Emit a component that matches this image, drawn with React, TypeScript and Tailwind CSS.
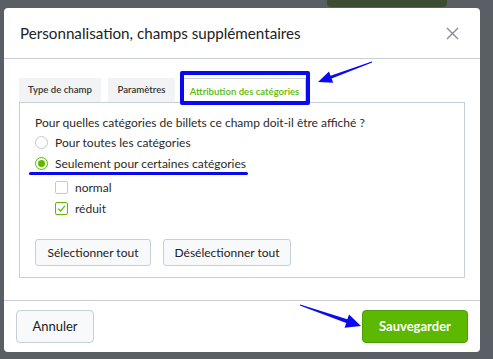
import React from "react";

const font = { fontFamily: '"Lato", "Liberation Sans", sans-serif' };

function Radio({ checked }: { checked?: boolean }) {
    return (
        <span
            className={
                "flex h-[13px] w-[13px] shrink-0 items-center justify-center rounded-full border bg-white " +
                (checked ? "border-[#5cb800]" : "border-[#c3cad1]")
            }
        >
            {checked && <span className="h-[7px] w-[7px] rounded-full bg-[#5cb800]" />}
        </span>
    );
}

function Checkbox({ checked }: { checked?: boolean }) {
    return (
        <span
            className={
                "flex h-[13px] w-[13px] shrink-0 items-center justify-center rounded-[2px] border bg-white " +
                (checked ? "border-[#5cb800]" : "border-[#c3cad1]")
            }
        >
            {checked && (
                <svg width="9" height="9" viewBox="0 0 9 9" fill="none">
                    <path d="M1.2 4.6 L3.6 7 L7.9 1.8" stroke="#5cb800" strokeWidth="1.2" />
                </svg>
            )}
        </span>
    );
}

export default function App() {
    return (
        <div className="relative h-[359px] w-[493px] overflow-hidden bg-[#5a5f66] pt-[8px] pl-[4px]" style={font}>
            {/* page content behind the overlay */}
            <div className="absolute left-[327px] top-0 h-[7px] w-[120px] rounded-b-[4px] bg-[#3b4c30]" />

            <div className="relative w-[476px] rounded-[4px] bg-white">
                {/* Header */}
                <div className="flex h-[51px] items-center justify-between border-b border-[#c6ced6] pl-[16px] pr-[21px]">
                    <h2 className="text-[15.2px] text-[#222]">Personnalisation, champs supplémentaires</h2>
                    <svg width="13" height="13" viewBox="0 0 13 13" className="mt-[1px]">
                        <path d="M1 1 L12 12 M12 1 L1 12" stroke="#868c93" strokeWidth="1.4" />
                    </svg>
                </div>

                {/* Body */}
                <div className="px-[15px] pt-[19px] pb-[22px]">
                    <div className="relative z-10 flex items-end whitespace-nowrap text-[9.6px] font-semibold text-[#333]">
                        <div className="flex h-[24px] w-[82px] items-center justify-center bg-[#f1f3f5]">Type de champ</div>
                        <div className="ml-[7px] flex h-[24px] w-[67px] items-center justify-center bg-[#f1f3f5]">Paramètres</div>
                        <div className="relative ml-[8px] -mb-px flex h-[25px] w-[123px] items-center justify-center border border-b-0 border-[#c6ced6] bg-white pt-[2px] text-[#5cb800]">
                            Attribution des catégories
                            <span className="absolute -left-[4px] -top-[8px] h-[34px] w-[130px] rounded-[2px] border-[4px] border-[#0a0af0]" />
                        </div>
                    </div>

                    <div className="h-[176px] border border-[#c6ced6] px-[15px] pt-[11px] text-[12px] text-[#2a2a2a]">
                        <div className="flex h-[18px] items-center">Pour quelles catégories de billets ce champ doit-il être affiché ?</div>
                        <div className="flex h-[21px] items-center gap-[7px]">
                            <Radio />
                            <span>Pour toutes les catégories</span>
                        </div>
                        <div className="flex h-[21px] items-center gap-[7px]">
                            <Radio checked />
                            <span>Seulement pour certaines catégories</span>
                        </div>
                        <div className="mt-[3px] flex h-[21px] items-center gap-[7px] pl-[20px]">
                            <Checkbox />
                            <span>normal</span>
                        </div>
                        <div className="flex h-[21px] items-center gap-[7px] pl-[20px]">
                            <Checkbox checked />
                            <span>réduit</span>
                        </div>
                        <div className="mt-[20px] flex gap-[12px]">
                            <button className="h-[27px] w-[116px] rounded-[3px] border border-[#c6ced6] bg-[#f8f9fa] text-[12px] text-[#222]">
                                Sélectionner tout
                            </button>
                            <button className="h-[27px] w-[128px] rounded-[3px] border border-[#c6ced6] bg-[#f8f9fa] text-[12px] text-[#222]">
                                Désélectionner tout
                            </button>
                        </div>
                    </div>
                </div>

                {/* Footer */}
                <div className="flex items-center justify-between border-t border-[#c6ced6] px-[12px] pt-[9px] pb-[9px]">
                    <button className="h-[33px] w-[78px] rounded-[4px] border border-[#c6ced6] bg-[#f8f9fa] text-[13px] text-[#222]">
                        Annuler
                    </button>
                    <button className="h-[33px] w-[106px] rounded-[4px] border border-[#4f9c0a] bg-[#5cb800] text-[13px] font-bold text-white">
                        Sauvegarder
                    </button>
                </div>

                {/* highlight underline */}
                <span className="absolute left-[25px] top-[164px] h-[3px] w-[219px] rounded-full bg-[#0a0af0]" />
            </div>

            {/* annotation arrows */}
            <svg className="pointer-events-none absolute left-0 top-0" width="493" height="359">
                <path d="M372.2 62.5 L371.8 61.5 L330.6 75.7 L329 71.5 L318 82 L333.2 82.8 L331.6 78.5 Z" fill="#0a0af0" />
                <path d="M299.8 305.5 L300.2 304.5 L347.3 319.2 L349.1 314.5 L361 326 L344.5 327.7 L346.3 323 Z" fill="#0a0af0" />
            </svg>
        </div>
    );
}
